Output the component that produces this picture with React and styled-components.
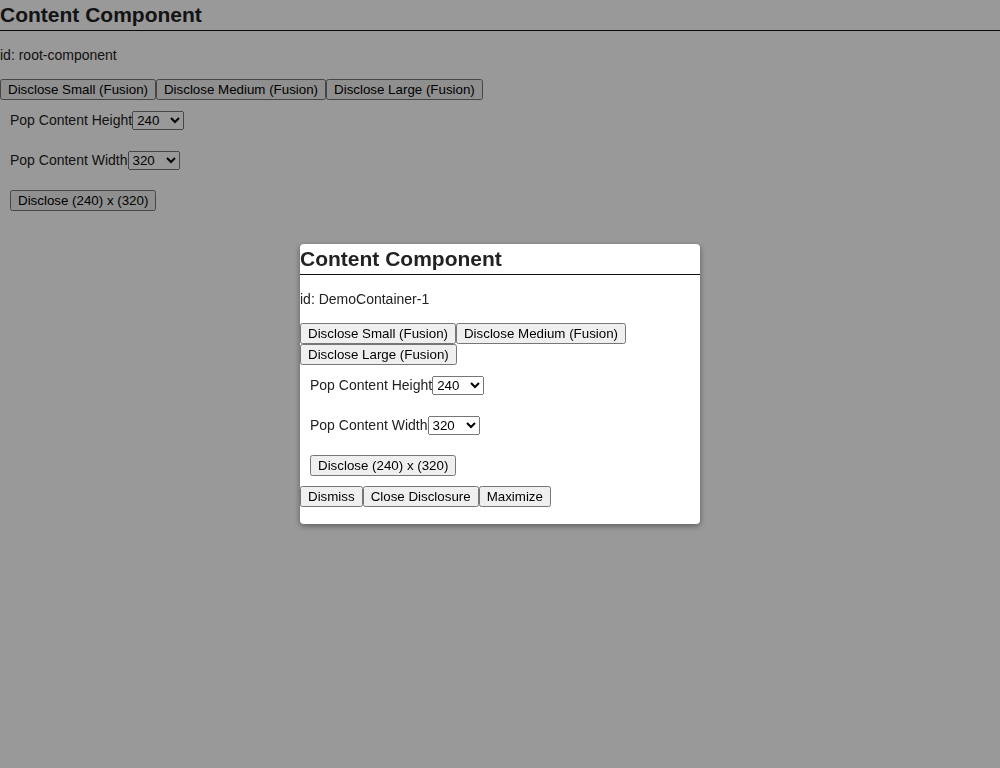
import React from "react"
import styled, { createGlobalStyle } from "styled-components"

const GlobalStyle = createGlobalStyle`
  html, body {
    margin: 0;
    padding: 0;
    background: #fff;
    color: #222;
    font-family: "Liberation Sans", Arial, sans-serif;
  }
`

const Title = styled.h2`
  margin: 0;
  padding: 3px 0;
  font-size: 21px;
  font-weight: bold;
  line-height: 24px;
  border-bottom: 1px solid #111;
`

const IdLine = styled.p`
  margin: 16px 0;
  font-size: 14px;
  line-height: 16px;
`

const ButtonRow = styled.div`
  display: flex;
  flex-wrap: wrap;
`

const Btn = styled.button`
  font-family: "Liberation Sans", Arial, sans-serif;
  font-size: 13.333px;
  color: #000;
  margin: 0;
`

const Row = styled.div`
  display: flex;
  align-items: center;
  min-height: 20px;
  padding: 10px;
  font-size: 14px;
`

const Select = styled.select`
  font-family: "Liberation Sans", Arial, sans-serif;
  font-size: 13.333px;
  height: 19px;
  margin: 0;
`

const Overlay = styled.div`
  position: fixed;
  inset: 0;
  background: rgba(0, 0, 0, 0.4);
  display: flex;
  align-items: center;
  justify-content: center;
`

const Popup = styled.div`
  width: 400px;
  height: 280px;
  box-sizing: border-box;
  background: #fff;
  border-radius: 4px;
  box-shadow: 0 2px 6px rgba(0, 0, 0, 0.4);
  overflow: hidden;
`

// the widest option sets the select width
const heights = ["240", "320", "480", "640", "1080"]
const widths = ["320", "480", "640", "800", "1280"]

const Content = ({ id, children }) => (
  <div>
    <Title>Content Component</Title>
    <IdLine>id: {id}</IdLine>
    <ButtonRow>
      <Btn>Disclose Small (Fusion)</Btn>
      <Btn>Disclose Medium (Fusion)</Btn>
      <Btn>Disclose Large (Fusion)</Btn>
    </ButtonRow>
    <Row>
      Pop Content Height
      <Select defaultValue="240">
        {heights.map(h => <option key={h}>{h}</option>)}
      </Select>
    </Row>
    <Row>
      Pop Content Width
      <Select defaultValue="320">
        {widths.map(w => <option key={w}>{w}</option>)}
      </Select>
    </Row>
    <Row>
      <Btn>Disclose (240) x (320)</Btn>
    </Row>
    {children}
  </div>
)

export default function App() {
  return (
    <>
      <GlobalStyle />
      <Content id="root-component" />
      <Overlay>
        <Popup>
          <Content id="DemoContainer-1">
            <ButtonRow>
              <Btn>Dismiss</Btn>
              <Btn>Close Disclosure</Btn>
              <Btn>Maximize</Btn>
            </ButtonRow>
          </Content>
        </Popup>
      </Overlay>
    </>
  )
}
